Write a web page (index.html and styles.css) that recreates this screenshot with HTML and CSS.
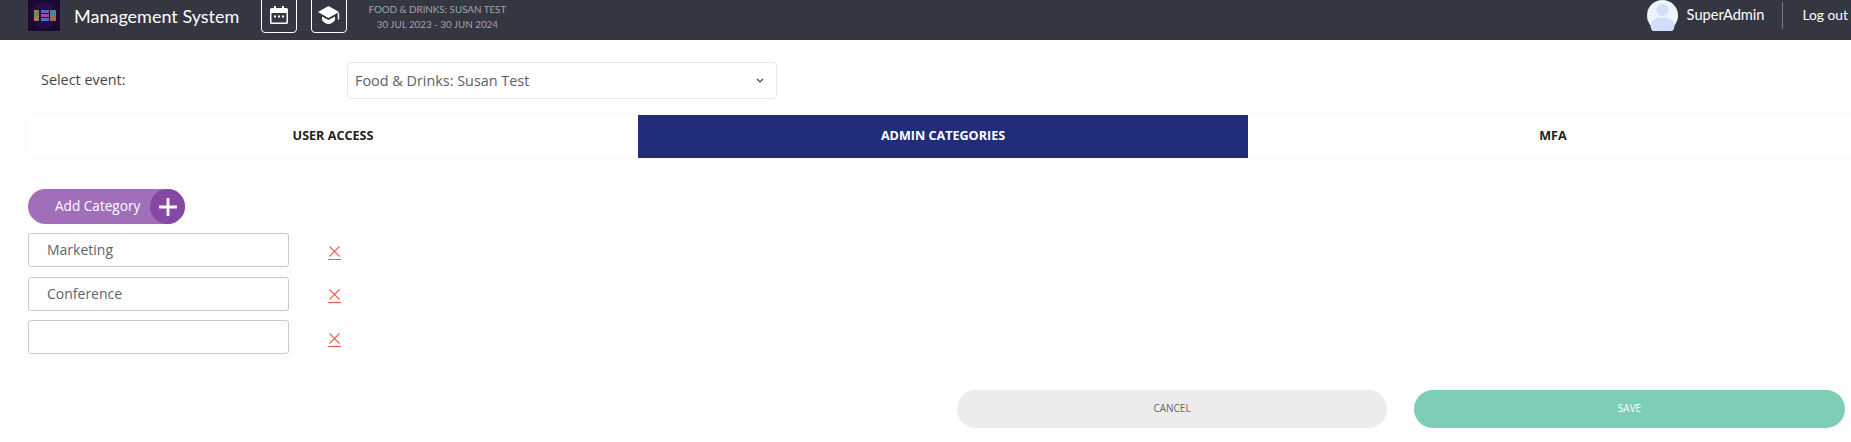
FILE: index.html
```html
<!DOCTYPE html>
<html lang="en">
  <head>
    <meta charset="UTF-8" />
    <meta name="viewport" content="width=device-width, initial-scale=1.0" />
    <title>Management System</title>
    <link rel="stylesheet" href="styles.css">
  </head>
  <body>
    <header class="topbar">
      <div class="logo">
        <svg width="32" height="31" viewBox="0 0 32 31">
          <rect width="32" height="31" fill="#1a0a30" />
          <circle cx="16" cy="15" r="13" fill="#260c47" />
          <rect x="6" y="10" width="5" height="11" rx="1" fill="#a5834f" />
          <rect x="6.500" y="12" width="4" height="4" fill="#5f8f66" />
          <rect x="13" y="10" width="8" height="3" fill="#5a64c4" />
          <rect x="13" y="14" width="8" height="3" fill="#b8428f" />
          <rect x="13" y="18" width="8" height="3" fill="#4a72c9" />
          <rect x="22" y="10" width="6" height="11" rx="1" fill="#4f8595" />
          <rect x="22.500" y="15" width="5" height="6" fill="#a86a48" />
        </svg>
      </div>
      <div class="app-title">Management System</div>
      <div class="icon-box">
        <svg width="18" height="18" viewBox="0 0 18 18">
          <path fill="#fff" d="M4 0h2v2h6V0h2v2h2.500A1.500 1.500 0 0 1 18 3.500v13a1.500 1.500 0 0 1-1.500 1.500h-15A1.500 1.500 0 0 1 0 16.500v-13A1.500 1.500 0 0 1 1.500 2H4z" />
          <rect x="1.500" y="7" width="15" height="9.500" fill="#343642" />
          <rect x="4" y="9.500" width="2" height="2" fill="#fff" />
          <rect x="8" y="9.500" width="2" height="2" fill="#fff" />
          <rect x="12" y="9.500" width="2" height="2" fill="#fff" />
        </svg>
      </div>
      <div class="icon-box icon-box-second">
        <svg width="22" height="18" viewBox="0 0 22 18">
          <path fill="#fff" d="M10.500 0 21 6 10.500 12 0 6z" />
          <path fill="#fff" d="M4 10.500l6.500 3.500 6.500-3.500V14c-1.800 2.500-4 4-6.500 4S5.800 16.500 4 14z" />
          <rect x="19.800" y="7" width="1.400" height="6.500" fill="#fff" />
        </svg>
      </div>
      <div class="event-info">
        <div>FOOD &amp; DRINKS: SUSAN TEST</div>
        <div>30 JUL 2023 - 30 JUN 2024</div>
      </div>
      <div class="user-area">
        <div class="avatar">
          <svg width="31" height="31" viewBox="0 0 31 31">
            <circle cx="15.500" cy="15.500" r="15.500" fill="#eef3fc" />
            <circle cx="15.500" cy="10" r="6" fill="#cfdffa" />
            <ellipse cx="15.500" cy="26" rx="12" ry="8.500" fill="#cfdffa" />
          </svg>
        </div>
        <span class="user-name">SuperAdmin</span>
        <a class="logout">Log out</a>
      </div>
    </header>

    <main class="content">
      <div class="event-row">
        <label class="event-label">Select event:</label>
        <div class="event-select">
          <span>Food &amp; Drinks: Susan Test</span>
          <svg width="8" height="5" viewBox="0 0 8 5">
            <path d="M1 1l3 3 3-3" fill="none" stroke="#444" stroke-width="1.200" />
          </svg>
        </div>
      </div>

      <div class="tabs">
        <div class="tab">USER ACCESS</div>
        <div class="tab tab-active">ADMIN CATEGORIES</div>
        <div class="tab">MFA</div>
      </div>

      <div class="add-category">
        <span>Add Category</span>
        <span class="add-circle">
          <svg width="18" height="18" viewBox="0 0 18 18">
            <path d="M9 0v18M0 9h18" stroke="#fff" stroke-width="2.800" />
          </svg>
        </span>
      </div>

      <div class="category-list">
        <div class="category-row">
          <div class="category-input">Marketing</div>
          <a class="remove">
            <svg width="13" height="11" viewBox="0 0 13 11"><path d="M1.500 0.500l10 10M11.500 0.500l-10 10" /></svg>
          </a>
        </div>
        <div class="category-row">
          <div class="category-input">Conference</div>
          <a class="remove">
            <svg width="13" height="11" viewBox="0 0 13 11"><path d="M1.500 0.500l10 10M11.500 0.500l-10 10" /></svg>
          </a>
        </div>
        <div class="category-row">
          <div class="category-input"></div>
          <a class="remove">
            <svg width="13" height="11" viewBox="0 0 13 11"><path d="M1.500 0.500l10 10M11.500 0.500l-10 10" /></svg>
          </a>
        </div>
      </div>

      <div class="actions">
        <button class="btn btn-cancel">CANCEL</button>
        <button class="btn btn-save">SAVE</button>
      </div>
    </main>
  </body>
</html>
```

FILE: styles.css
```css
body {
  margin: 0;
  height: 442px;
  overflow: hidden;
  background: #fff;
  font-family: "Open Sans", sans-serif;
}

/* Top bar */
.topbar {
  display: flex;
  height: 40px;
  padding-left: 28px;
  background: #343642;
  overflow: hidden;
}

.logo {
  flex: none;
  height: 31px;
}

.logo svg {
  display: block;
}

.app-title {
  margin: 5px 0 0 14px;
  font-family: Lato, sans-serif;
  font-size: 18px;
  line-height: 22px;
  color: #fff;
}

.icon-box {
  display: flex;
  flex: none;
  justify-content: center;
  align-items: center;
  box-sizing: border-box;
  width: 36px;
  height: 38px;
  margin: -5px 0 0 22px;
  padding-top: 1px;
  border: 1px solid #fff;
  border-radius: 4px;
}

.icon-box-second {
  margin-left: 14px;
}

.event-info {
  flex: none;
  width: 140px;
  margin: 2px 0 0 20px;
  font-family: Lato, sans-serif;
  font-size: 9.8px;
  line-height: 15px;
  text-align: center;
  white-space: nowrap;
  color: #a3a4aa;
}

.user-area {
  display: flex;
  align-items: flex-start;
  margin-left: auto;
}

.avatar {
  height: 31px;
}

.user-name {
  margin: 6px 0 0 9px;
  font-family: Lato, sans-serif;
  font-size: 14.6px;
  line-height: 18px;
  color: #fff;
}

.logout {
  height: 27px;
  margin: 2px 0 0 18px;
  padding: 4px 3px 0 19px;
  box-sizing: border-box;
  border-left: 1px solid #777983;
  font-family: Lato, sans-serif;
  font-size: 13.8px;
  line-height: 18px;
  color: #fff;
}

/* Content */
.event-row {
  display: flex;
  align-items: center;
  height: 37px;
  margin-top: 22px;
  padding-left: 41px;
}

.event-label {
  width: 306px;
  margin-top: -2px;
  font-size: 14.4px;
  color: #444;
}

.event-select {
  display: flex;
  justify-content: space-between;
  align-items: center;
  width: 430px;
  height: 37px;
  padding: 0 12px 0 7px;
  box-sizing: border-box;
  border: 1px solid #e8e8e8;
  border-radius: 4px;
  font-size: 14.4px;
  color: #5b5f66;
}

.tabs {
  display: flex;
  width: 1830px;
  height: 43px;
  margin: 16px 0 0 28px;
  box-shadow: 0 0 8px rgba(0, 0, 0, 0.04);
}

.tab {
  flex: none;
  width: 610px;
  font-size: 12.6px;
  font-weight: 700;
  line-height: 41px;
  text-align: center;
  color: #222;
}

.tab-active {
  background: #212c7b;
  color: #fff;
}

.add-category {
  display: flex;
  justify-content: space-between;
  align-items: center;
  width: 157px;
  height: 35px;
  margin: 31px 0 0 28px;
  padding-left: 27px;
  box-sizing: border-box;
  border-radius: 18px;
  background: #a16eb9;
  font-size: 13.6px;
  color: #fff;
}

.add-category span:first-child {
  margin-top: -2px;
}

.add-circle {
  display: flex;
  justify-content: center;
  align-items: center;
  width: 35px;
  height: 35px;
  border-radius: 50%;
  background: #8549a5;
}

.category-list {
  display: flex;
  flex-direction: column;
  gap: 9.5px;
  margin: 9px 0 0 28px;
}

.category-row {
  display: flex;
  align-items: center;
}

.category-input {
  width: 261px;
  height: 34px;
  padding-left: 18px;
  box-sizing: border-box;
  border: 1px solid #c9c9c9;
  border-radius: 3px;
  font-size: 14px;
  line-height: 32px;
  color: #5b6570;
}

/* red x with an underline, same as a link */
.remove {
  display: block;
  height: 13px;
  margin: 5px 0 0 39px;
  border-bottom: 1px solid #f0524f;
}

.remove svg {
  display: block;
  fill: none;
  stroke: #f2605c;
  stroke-width: 1.2;
}

.actions {
  display: flex;
  gap: 27px;
  margin: 36px 0 0 957px;
}

.btn {
  width: 430px;
  height: 38px;
  padding: 0 0 3px;
  border: 0;
  border-radius: 19px;
  font-family: "Open Sans", sans-serif;
  font-size: 10px;
}

.btn-cancel {
  background: #ececec;
  color: #666;
}

.btn-save {
  width: 431px;
  background: #7dceb6;
  color: #fff;
}
```
